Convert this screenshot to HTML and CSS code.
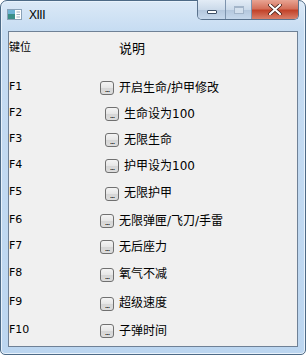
FILE: index.html
```html
<!DOCTYPE html>
<html lang="zh">
<head>
  <meta charset="UTF-8" />
  <title>XIII</title>
  <link rel="stylesheet" href="styles.css">
</head>
<body>
  <div class="window">
    <div class="titlebar">
      <div class="app-icon">
        <svg width="15" height="11" viewBox="0 0 15 11">
          <rect x="0.5" y="0.5" width="14" height="10" fill="#fff" stroke="#8aa2b8"/>
          <rect x="1" y="1" width="7" height="9" fill="#3b8f88"/>
          <rect x="1" y="1" width="7" height="4" fill="#6fb4d6"/>
          <line x1="9.5" y1="3" x2="13" y2="3" stroke="#9fb0c0"/>
          <line x1="9.5" y1="5.5" x2="13" y2="5.5" stroke="#9fb0c0"/>
          <line x1="9.5" y1="8" x2="13" y2="8" stroke="#9fb0c0"/>
        </svg>
      </div>
      <span class="title">XIII</span>
      <div class="caption-buttons">
        <div class="cbtn cbtn-min"><span class="min-bar"></span></div>
        <div class="cbtn cbtn-max"><span class="max-box"></span></div>
        <div class="cbtn cbtn-close">
          <svg width="14" height="11" viewBox="0 0 14 11">
            <path d="M2 1 L12 10 M12 1 L2 10" stroke="#3a1a14" stroke-width="3.6" stroke-linecap="round"/>
            <path d="M2 1 L12 10 M12 1 L2 10" stroke="#fff" stroke-width="2.2" stroke-linecap="round"/>
          </svg>
        </div>
      </div>
    </div>

    <div class="client">
      <div class="header">
        <span class="key">键位</span>
        <span class="head-desc">说明</span>
      </div>

      <div class="row"><span class="key">F1</span><span class="opt"><span class="dots">...</span>开启生命/护甲修改</span></div>
      <div class="row"><span class="key">F2</span><span class="opt indent"><span class="dots">...</span>生命设为100</span></div>
      <div class="row"><span class="key">F3</span><span class="opt indent"><span class="dots">...</span>无限生命</span></div>
      <div class="row"><span class="key">F4</span><span class="opt indent"><span class="dots">...</span>护甲设为100</span></div>
      <div class="row row-gap"><span class="key">F5</span><span class="opt indent"><span class="dots">...</span>无限护甲</span></div>
      <div class="row"><span class="key">F6</span><span class="opt"><span class="dots">...</span>无限弹匣/飞刀/手雷</span></div>
      <div class="row"><span class="key">F7</span><span class="opt"><span class="dots">...</span>无后座力</span></div>
      <div class="row row-gap"><span class="key">F8</span><span class="opt"><span class="dots">...</span>氧气不减</span></div>
      <div class="row row-gap"><span class="key">F9</span><span class="opt"><span class="dots">...</span>超级速度</span></div>
      <div class="row"><span class="key">F10</span><span class="opt"><span class="dots">...</span>子弹时间</span></div>
    </div>
  </div>
</body>
</html>
```

FILE: styles.css
```css
* { box-sizing: border-box; }

body {
  margin: 0;
  background: #fff;
  font-family: "DejaVu Sans", "Noto Sans CJK SC", sans-serif;
}

.window {
  width: 306px;
  height: 355px;
  border: 1px solid #4d6a86;
  border-radius: 7px 7px 5px 5px;
  background: linear-gradient(180deg, #dbe9f7 0px, #c6dcf2 30px, #bcd6f0 100%);
  padding: 0 7px 7px 7px;
  display: flex;
  flex-direction: column;
  box-shadow: inset 0 0 0 1px #e8f2fc;
}

/* TITLE BAR */
.titlebar {
  height: 22px;
  display: flex;
  align-items: center;
  position: relative;
}

.app-icon {
  margin-left: -1px;
  margin-top: 5px;
  display: flex;
}

.title {
  margin-left: 7px;
  margin-top: 5px;
  font-family: "Liberation Sans", sans-serif;
  font-size: 12px;
  letter-spacing: -0.5px;
  color: #000;
}

.caption-buttons {
  position: absolute;
  top: -1px;
  right: -1px;
  display: flex;
  border: 1px solid #5b738e;
  border-top: none;
  border-radius: 0 0 5px 5px;
  overflow: hidden;
}

.cbtn {
  height: 19px;
  display: flex;
  align-items: center;
  justify-content: center;
}

.cbtn-min {
  width: 28px;
  background: linear-gradient(180deg, #e3ecf6 0%, #cbdaea 50%, #b3c6dc 51%, #c6d8ec 100%);
  border-right: 1px solid #7d93ad;
}

.cbtn-max {
  width: 26px;
  background: linear-gradient(180deg, #e3ecf6 0%, #cbdaea 50%, #b3c6dc 51%, #c6d8ec 100%);
  border-right: 1px solid #7d93ad;
}

.cbtn-close {
  width: 46px;
  background: linear-gradient(180deg, #e8a493 0%, #d4715b 45%, #c2432a 55%, #d9806a 100%);
}

.min-bar {
  display: block;
  width: 10px;
  height: 4px;
  margin-top: 5px;
  background: #fff;
  border: 1px solid #3d4f66;
  border-radius: 1px;
}

.max-box {
  display: block;
  width: 10px;
  height: 8px;
  border: 1px solid #9fb1c6;
  border-top-width: 2px;
  background: #d6e2ef;
  opacity: 0.9;
}

/* CLIENT AREA */
.client {
  flex: 1;
  margin-top: 8px;
  background: #f0f0f0;
  border: 1px solid #6f8196;
  font-size: 12px;
  color: #000;
  padding: 6px 0 0 0;
}

.header {
  display: flex;
  height: 35px;
  font-size: 13px;
}

.header .key {
  width: 110px;
}

.row {
  display: flex;
  align-items: center;
  height: 26px;
}

.row-gap {
  height: 29px;
}

.key {
  width: 91px;
  font-size: 11px;
}

.opt {
  display: flex;
  align-items: center;
}

.opt.indent {
  margin-left: 5px;
}

.dots {
  width: 14px;
  height: 14px;
  margin-right: 5px;
  margin-top: 4px;
  border: 1px solid #707070;
  border-radius: 3px;
  background: linear-gradient(180deg, #f4f4f4 0%, #e6e6e6 50%, #d6d6d6 51%, #dddddd 100%);
  font-size: 9px;
  line-height: 15px;
  text-align: center;
  letter-spacing: -1px;
  font-family: "Liberation Sans", sans-serif;
}
```
